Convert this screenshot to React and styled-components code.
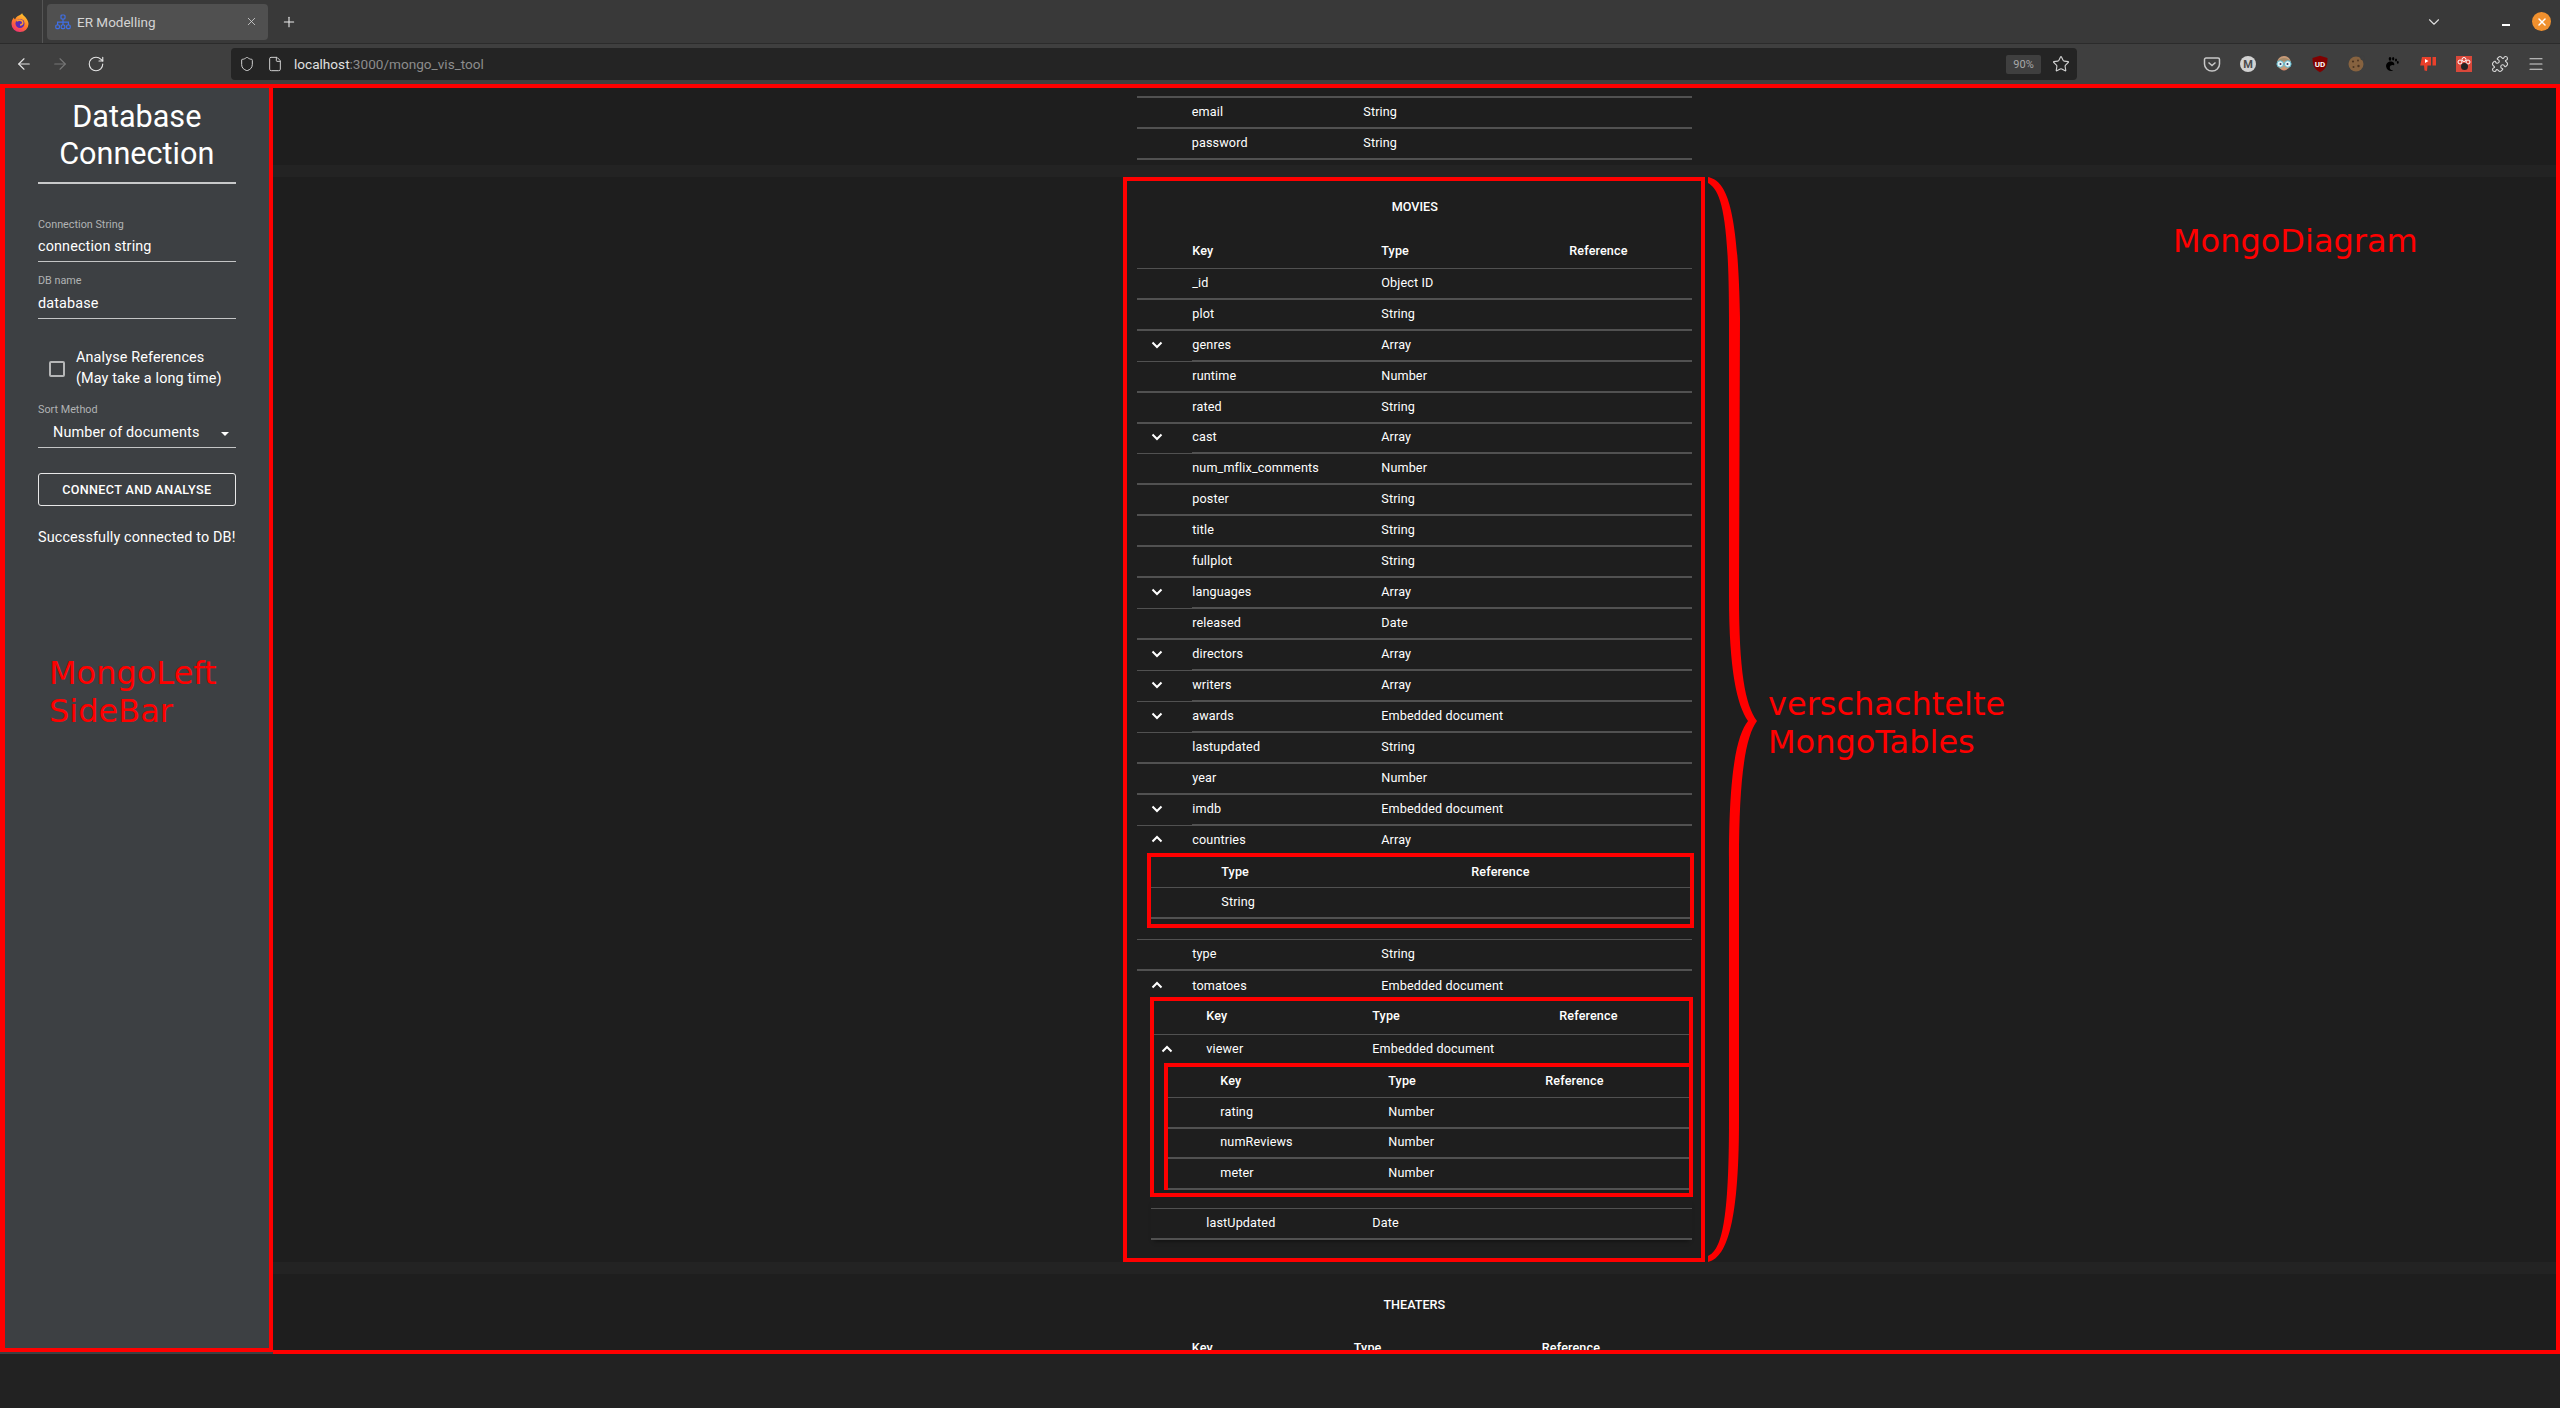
import React from 'react'
import styled, { createGlobalStyle } from 'styled-components'
import { ArrowLeft, ArrowRight, RotateCw, Shield, File, Star, Puzzle, Menu, X, Plus, ChevronDown } from 'lucide-react'

const RED = '#ff0000'
const LINE = '#515151'
const PAPER = '#1e1e1e'

const GlobalStyle = createGlobalStyle`
  html, body { margin: 0; padding: 0; background: #222222; }
  * { box-sizing: border-box; }
`

const Page = styled.div`
  position: relative;
  width: 2560px;
  height: 1408px;
  overflow: hidden;
  background: #222222;
  color: #fff;
  font-family: Roboto, "Liberation Sans", sans-serif;
`

/* browser chrome */
const TabBar = styled.div`
  display: flex;
  align-items: center;
  height: 44px;
  background: #393939;
  border-bottom: 1px solid #2b2b2b;
`
const AppButton = styled.div`
  display: flex;
  align-items: center;
  justify-content: center;
  width: 43px;
  height: 43px;
  padding-right: 3px;
  border-right: 1px solid #555;
`
const Tab = styled.div`
  display: flex;
  align-items: center;
  width: 221px;
  height: 36px;
  margin-left: 4px;
  padding: 0 10px 0 8px;
  gap: 6px;
  background: #505050;
  border-radius: 4px;
  color: #d4d4d4;
  font-size: 13.5px;
`
const TabTitle = styled.span`
  flex: 1;
`
const NewTab = styled.div`
  display: flex;
  margin-left: 13px;
  color: #eee;
`
const WindowControls = styled.div`
  display: flex;
  align-items: center;
  margin-left: auto;
  padding-right: 9px;
  color: #ddd;
`
const MinimizeMark = styled.div`
  width: 8px;
  height: 2px;
  margin: 6px 22px 0 59.5px;
  background: #fff;
`
const CloseDot = styled.div`
  display: flex;
  align-items: center;
  justify-content: center;
  width: 19px;
  height: 19px;
  border-radius: 50%;
  background: #f0902e;
  color: #fff;
`
const NavBar = styled.div`
  display: flex;
  align-items: center;
  height: 40px;
  padding-left: 15px;
  background: #3f3f3f;
`
const NavButtons = styled.div`
  display: flex;
  gap: 18px;
  color: #e4e4e4;
`
const DimIcon = styled.span`
  display: flex;
  color: #777;
`
const UrlBar = styled.div`
  display: flex;
  align-items: center;
  width: 1846px;
  height: 32px;
  margin-left: 126px;
  padding: 0 7px 0 8px;
  background: #242424;
  border-radius: 4px;
  color: #d0d0d0;
  font-size: 13.6px;
`
const UrlIcons = styled.div`
  display: flex;
  gap: 12px;
  margin-right: 11px;
`
const UrlText = styled.span`
  flex: 1;
  color: #e0e0e0;
`
const UrlRest = styled.span`
  color: #8c8c8c;
`
const ZoomBadge = styled.span`
  display: flex;
  align-items: center;
  justify-content: center;
  width: 35px;
  height: 19px;
  margin-right: 11px;
  background: #3f3f3f;
  border-radius: 2px;
  color: #a8a8a8;
  font-size: 11px;
`
const Extensions = styled.div`
  display: flex;
  gap: 18px;
  margin-left: 126px;
  color: #d8d8d8;
`

/* app body */
const Body = styled.div`
  display: flex;
  height: 1270px;
`
const SidebarShell = styled.div`
  flex: 0 0 272px;
  padding-bottom: 2px;
  background: #3d4043;
`
const Sidebar = styled.aside`
  display: flex;
  flex-direction: column;
  height: 100%;
  padding: 9.5px 33px 0;
  border: 4px solid ${RED};
  border-left-width: 5px;
`
const Title = styled.h4`
  margin: 0;
  padding-bottom: 10.5px;
  border-bottom: 2px solid #c8c9ca;
  font-size: 30.6px;
  font-weight: 400;
  line-height: 37px;
  text-align: center;
`
const Field = styled.div`
  margin-top: ${p => p.$top || 12}px;
`
const FieldLabel = styled.div`
  height: 13px;
  margin-bottom: 2.5px;
  color: #b1b3b4;
  font-size: 10.8px;
  line-height: 13px;
`
const FieldValue = styled.div`
  display: flex;
  align-items: center;
  justify-content: space-between;
  height: 29px;
  padding: 0 7px 1px ${p => p.$inset || 0}px;
  border-bottom: 1px solid #c4c5c6;
  font-size: 14.4px;
  letter-spacing: 0.135px;
`
const Caret = styled.span`
  width: 0;
  height: 0;
  margin-top: 3px;
  border-left: 4.5px solid transparent;
  border-right: 4.5px solid transparent;
  border-top: 4.5px solid #fff;
`
const CheckRow = styled.label`
  display: flex;
  align-items: center;
  gap: 11px;
  margin-top: 28px;
  padding-left: 11px;
  font-size: 14.4px;
  line-height: 21px;
  letter-spacing: 0.135px;
`
const CheckBox = styled.span`
  flex: none;
  width: 16px;
  height: 16px;
  margin-top: 2px;
  border: 2px solid #b5b6b7;
  border-radius: 2px;
`
const ConnectButton = styled.button`
  height: 33px;
  margin-top: 25.4px;
  background: transparent;
  border: 1px solid #e8e8e8;
  border-radius: 3px;
  color: #fff;
  font-family: inherit;
  font-size: 12.6px;
  font-weight: 500;
  letter-spacing: 0.36px;
`
const Status = styled.div`
  margin-top: 21.8px;
  font-size: 14.4px;
  line-height: 20px;
  letter-spacing: 0.135px;
  white-space: nowrap;
`

const Diagram = styled.main`
  flex: 1;
  overflow: hidden;
  border: 4px solid ${RED};
  border-left: 0;
`
const Scroller = styled.div`
  display: flex;
  flex-direction: column;
  gap: 12px;
  margin-top: -21px;
  background: #232323;
`
const Paper = styled.section`
  display: flex;
  flex-direction: column;
  align-items: center;
  padding-top: ${p => p.$top || 0}px;
  padding-bottom: ${p => p.$bottom || 0}px;
  background: ${PAPER};
`
const TableBox = styled.div`
  width: 582px;
  padding: 0 9px 18px 10px;
  border: 4px solid ${RED};
`
const Table = styled.div`
  width: 555px;
`
const TableTitle = styled.div`
  height: 53px;
  font-size: 12.6px;
  font-weight: 500;
  line-height: 51px;
  text-align: center;
`
const Row = styled.div`
  display: grid;
  grid-template-columns: ${p => p.$cols};
  height: ${p => p.$height || 30.94}px;
  font-size: 12.6px;
  font-weight: ${p => (p.$head ? 500 : 400)};
  letter-spacing: 0.135px;
`
const Cell = styled.div`
  display: flex;
  align-items: center;
  padding-top: ${p => p.$pt || 0}px;
  padding-bottom: ${p => p.$pb ?? 2}px;
  border-bottom: ${p => p.$line ?? 2}px solid ${LINE};
  white-space: nowrap;
`
const ToggleCell = styled(Cell)`
  padding-left: ${p => p.$left || 15}px;
`
const Nested = styled.div`
  margin: ${p => p.$margin};
  border: 4px solid ${RED};
  ${p => p.$open && 'border-right: 0; border-bottom: 0;'}
  padding-bottom: ${p => p.$pb || 0}px;
`
const RowSpacer = styled.div`
  height: 12px;
  margin-left: ${p => p.$left || 0}px;
  border-bottom: 1px solid ${LINE};
`
const Indented = styled.div`
  margin-left: 14px;
  box-shadow: 0 4px 4px -3px rgba(0, 0, 0, 0.5);
`

/* red notes drawn on top of the screenshot */
const Note = styled.div`
  position: absolute;
  left: ${p => p.$x}px;
  top: ${p => p.$y}px;
  color: ${RED};
  font-family: "DejaVu Sans", sans-serif;
  font-size: 32px;
  line-height: 38px;
  white-space: nowrap;
`
const Brace = styled.svg`
  position: absolute;
  left: 1700px;
  top: 170px;
`

const FirefoxLogo = () => (
  <svg width='18' height='20' viewBox='0 0 18 20'>
    <defs>
      <linearGradient id='ff' x1='0.7' y1='0' x2='0.2' y2='1'>
        <stop offset='0' stopColor='#ffcb2e' />
        <stop offset='0.5' stopColor='#ff7b2a' />
        <stop offset='1' stopColor='#f0287a' />
      </linearGradient>
    </defs>
    <path d='M11 1c.5 2.500 3 3 4 5 1.500 2 2.500 4 2.500 6a8.500 8 0 0 1-17 0c0-3 1-5 2.500-6.500 0 1 .5 1.500 1 2C5 4.500 8 3.500 9 3c1-.5 1.700-1 2-2z' fill='url(#ff)' />
    <circle cx='9' cy='11.500' r='4.500' fill='#5b2bb5' />
    <path d='M5.500 9c2-1.500 5-1 6 .5 1 2-.5 3.500-2.500 3.500' fill='none' stroke='#ff9a2e' strokeWidth='1.600' />
  </svg>
)

const ErFavicon = () => (
  <svg width='16' height='16' viewBox='0 0 16 16' fill='none' stroke='#3f6fe6' strokeWidth='1.200'>
    <rect x='6' y='1' width='4' height='4' rx='1' />
    <rect x='0.800' y='11' width='3.600' height='3.600' rx='1' />
    <rect x='6.200' y='11' width='3.600' height='3.600' rx='1' />
    <rect x='11.600' y='11' width='3.600' height='3.600' rx='1' />
    <path d='M8 5v6M2.600 11V8.200h10.800V11' />
  </svg>
)

const ExtIcon = ({ children }) => <svg width='18' height='18' viewBox='0 0 18 18'>{children}</svg>

const Chevron = ({ up }) => (
  <svg width='12' height='8' viewBox='0 0 12 8' fill='none' stroke='#fff' strokeWidth='2'>
    <path d={up ? 'M1.500 6.500L6 2l4.500 4.500' : 'M1.500 1.500L6 6l4.500-4.500'} />
  </svg>
)

const MAIN_COLS = '55px 189px 188px 1fr'

const MOVIE_ROWS = [
  ['_id', 'Object ID'],
  ['plot', 'String'],
  ['genres', 'Array', true],
  ['runtime', 'Number'],
  ['rated', 'String'],
  ['cast', 'Array', true],
  ['num_mflix_comments', 'Number'],
  ['poster', 'String'],
  ['title', 'String'],
  ['fullplot', 'String'],
  ['languages', 'Array', true],
  ['released', 'Date'],
  ['directors', 'Array', true],
  ['writers', 'Array', true],
  ['awards', 'Embedded document', true],
  ['lastupdated', 'String'],
  ['year', 'Number'],
  ['imdb', 'Embedded document', true]
]

const HeadRow = ({ cols, pb = 0, height = 35, labels = ['Key', 'Type', 'Reference'] }) => (
  <Row $head $cols={cols} $height={height}>
    <Cell $line={1} $pb={pb} />
    {labels.map(label => <Cell key={label} $line={1} $pb={pb}>{label}</Cell>)}
  </Row>
)

const DataRow = ({ cols, name, type, closed }) => (
  <Row $cols={cols}>
    <ToggleCell $line={closed ? 1 : 2} $left={13.5}>{closed && <Chevron />}</ToggleCell>
    <Cell>{name}</Cell>
    <Cell>{type}</Cell>
    <Cell />
  </Row>
)

const OpenRow = ({ cols, name, type, height, left = 13.5, pt = 0 }) => (
  <Row $cols={cols} $height={height}>
    <ToggleCell $line={0} $pb={0} $pt={pt} $left={left}><Chevron up /></ToggleCell>
    <Cell $line={0} $pb={0} $pt={pt}>{name}</Cell>
    <Cell $line={0} $pb={0} $pt={pt}>{type}</Cell>
    <Cell $line={0} />
  </Row>
)

const InfoField = ({ label, value, top }) => (
  <Field $top={top}>
    <FieldLabel>{label}</FieldLabel>
    <FieldValue>{value}</FieldValue>
  </Field>
)

const BrowserChrome = () => (
  <>
    <TabBar>
      <AppButton><FirefoxLogo /></AppButton>
      <Tab>
        <ErFavicon />
        <TabTitle>ER Modelling</TabTitle>
        <X size={13} strokeWidth={1.5} />
      </Tab>
      <NewTab><Plus size={16} strokeWidth={1.6} /></NewTab>
      <WindowControls>
        <ChevronDown size={18} strokeWidth={1.5} />
        <MinimizeMark />
        <CloseDot><X size={12} strokeWidth={3} /></CloseDot>
      </WindowControls>
    </TabBar>
    <NavBar>
      <NavButtons>
        <ArrowLeft size={18} strokeWidth={1.5} />
        <DimIcon><ArrowRight size={18} strokeWidth={1.5} /></DimIcon>
        <RotateCw size={18} strokeWidth={1.5} />
      </NavButtons>
      <UrlBar>
        <UrlIcons>
          <Shield size={16} strokeWidth={1.5} />
          <File size={16} strokeWidth={1.5} />
        </UrlIcons>
        <UrlText>localhost<UrlRest>:3000/mongo_vis_tool</UrlRest></UrlText>
        <ZoomBadge>90%</ZoomBadge>
        <Star size={18} strokeWidth={1.5} />
      </UrlBar>
      <Extensions>
        <ExtIcon>
          <path d='M3 3h12a1.500 1.500 0 0 1 1.500 1.500V9a7.500 7 0 0 1-15 0V4.500A1.500 1.500 0 0 1 3 3z' fill='none' stroke='#c8c8c8' strokeWidth='1.500' />
          <path d='M5.500 7.500L9 10.500l3.500-3' fill='none' stroke='#c8c8c8' strokeWidth='1.500' />
        </ExtIcon>
        <ExtIcon>
          <circle cx='9' cy='9' r='8' fill='#d2d2d2' />
          <text x='9' y='13' textAnchor='middle' fontSize='11' fontWeight='700' fontFamily='Roboto, sans-serif' fill='#4a4a4a'>M</text>
        </ExtIcon>
        <ExtIcon>
          <circle cx='9' cy='8' r='7' fill='#c79a78' />
          <path d='M3 6c2-4 10-4 12 0z' fill='#a58a6a' />
          <circle cx='5.200' cy='9' r='3.300' fill='#dff3f7' stroke='#5db4c8' />
          <circle cx='12.800' cy='9' r='3.300' fill='#dff3f7' stroke='#5db4c8' />
          <circle cx='5.500' cy='9' r='1' fill='#335' />
          <circle cx='12.500' cy='9' r='1' fill='#335' />
          <path d='M6 14c2 2 4 2 6 0z' fill='#d98a6a' />
        </ExtIcon>
        <ExtIcon>
          <path d='M9 0.800l7.500 2.200c0 7-1.500 11.500-7.500 14.200C3 14.500 1.500 10 1.500 3z' fill='#800000' />
          <text x='9' y='11.500' textAnchor='middle' fontSize='8' fontWeight='700' fontFamily='Roboto, sans-serif' fill='#fff'>UD</text>
        </ExtIcon>
        <ExtIcon>
          <circle cx='9' cy='9' r='7.500' fill='#86623f' />
          <circle cx='6' cy='6.500' r='1.100' fill='#4a3320' />
          <circle cx='11' cy='5.500' r='0.900' fill='#4a3320' />
          <circle cx='11.500' cy='11' r='1.200' fill='#4a3320' />
          <circle cx='6.500' cy='12' r='1' fill='#4a3320' />
          <circle cx='15.500' cy='3' r='2.200' fill='#3f3f3f' />
        </ExtIcon>
        <ExtIcon>
          <path d='M8.500 6.500C5 6 2.500 8.800 3.200 12c.7 3.300 4.500 5 7 3.500-2.200 0-3.700-1.500-3.400-3.500.3-1.800 2.700-2.700 4.200-1.600 1-1.800-.2-3.600-2.500-3.900z' fill='#000' />
          <ellipse cx='7' cy='3.800' rx='1.300' ry='1.900' fill='#000' />
          <ellipse cx='10.200' cy='3.800' rx='1.100' ry='1.800' fill='#000' />
          <ellipse cx='13' cy='5' rx='1' ry='1.600' fill='#000' />
          <ellipse cx='14.800' cy='7.400' rx='0.900' ry='1.300' fill='#000' />
        </ExtIcon>
        <ExtIcon>
          <path d='M3 2h9v8.500H8.500L8 16l-2.500-.500L5 10.500H1.200z' fill='#e9402b' />
          <rect x='13.500' y='2' width='3.500' height='8.500' fill='#e9402b' />
          <path d='M6 4l3.500 2L6 8z' fill='#fff' />
        </ExtIcon>
        <ExtIcon>
          <rect x='1' y='1' width='16' height='16' fill='#d9483a' />
          <circle cx='5' cy='7' r='2' fill='none' stroke='#fff' />
          <circle cx='9' cy='4.500' r='2' fill='none' stroke='#fff' />
          <circle cx='13' cy='7' r='2' fill='none' stroke='#fff' />
          <circle cx='9.500' cy='11.500' r='3.500' fill='#222' />
        </ExtIcon>
        <Puzzle size={18} strokeWidth={1.5} />
        <Menu size={18} strokeWidth={1.5} />
      </Extensions>
    </NavBar>
  </>
)

const MongoLeftSideBar = () => (
  <SidebarShell>
    <Sidebar>
      <Title>Database Connection</Title>
      <InfoField label='Connection String' value='connection string' top={33.5} />
      <InfoField label='DB name' value='database' />
      <CheckRow>
        <CheckBox />
        <span>Analyse References<br />(May take a long time)</span>
      </CheckRow>
      <Field $top={14.6}>
        <FieldLabel>Sort Method</FieldLabel>
        <FieldValue $inset={15}>Number of documents<Caret /></FieldValue>
      </Field>
      <ConnectButton>CONNECT AND ANALYSE</ConnectButton>
      <Status>Successfully connected to DB!</Status>
    </Sidebar>
  </SidebarShell>
)

const MoviesTable = () => (
  <TableBox>
    <TableTitle>MOVIES</TableTitle>
    <Table>
      <HeadRow cols={MAIN_COLS} />
      {MOVIE_ROWS.map(([name, type, closed]) => (
        <DataRow key={name} cols={MAIN_COLS} name={name} type={type} closed={closed} />
      ))}
      <OpenRow cols={MAIN_COLS} name='countries' type='Array' height={27.5} />
      <Nested $margin='0 -2px 0 10px' $pb={4.5}>
        <HeadRow cols='70px 250px 1fr' height={31} labels={['Type', 'Reference']} pb={2} />
        <Row $cols='70px 250px 1fr'>
          <Cell /><Cell>String</Cell><Cell />
        </Row>
      </Nested>
      <RowSpacer />
      <DataRow cols={MAIN_COLS} name='type' type='String' />
      <OpenRow cols={MAIN_COLS} name='tomatoes' type='Embedded document' height={26} pt={3} />
      <Nested $margin='0 -1px 0 13px' $pb={3}>
        <HeadRow cols='52px 166px 187px 1fr' height={34} pb={3} />
        <OpenRow cols='52px 166px 187px 1fr' name='viewer' type='Embedded document' height={28} left={7} />
        <Nested $open $margin='0 0 0 10px'>
          <HeadRow cols='52px 168px 157px 1fr' height={31} pb={3} />
          {[['rating', 'Number'], ['numReviews', 'Number'], ['meter', 'Number']].map(([name, type]) => (
            <DataRow key={name} cols='52px 168px 157px 1fr' name={name} type={type} />
          ))}
        </Nested>
      </Nested>
      <Indented>
        <RowSpacer />
        <DataRow cols='55px 166px 187px 1fr' name='lastUpdated' type='Date' />
      </Indented>
    </Table>
  </TableBox>
)

const MongoDiagram = () => (
  <Diagram>
    <Scroller>
      <Paper $bottom={5}>
        <Table>
          <DataRow cols='55px 171.5px 188px 1fr' name='name' type='String' />
          <DataRow cols='55px 171.5px 188px 1fr' name='email' type='String' />
          <DataRow cols='55px 171.5px 188px 1fr' name='password' type='String' />
        </Table>
      </Paper>
      <Paper><MoviesTable /></Paper>
      <Paper $top={5} $bottom={20}>
        <Table>
          <TableTitle>THEATERS</TableTitle>
          <HeadRow cols='55px 162px 188px 1fr' pb={4} />
        </Table>
      </Paper>
    </Scroller>
  </Diagram>
)

export default function App () {
  return (
    <Page>
      <GlobalStyle />
      <BrowserChrome />
      <Body>
        <MongoLeftSideBar />
        <MongoDiagram />
      </Body>
      <Note $x={49} $y={654}>MongoLeft<br />SideBar</Note>
      <Note $x={2173} $y={222}>MongoDiagram</Note>
      <Note $x={1768} $y={685}>verschachtelte<br />MongoTables</Note>
      <Brace width='70' height='1100' viewBox='1700 170 70 1100'>
        <path
          fill={RED}
          d='M1708 177C1725 181 1738 200 1740 318L1739 596C1739 670 1745 705 1757 721C1745 737 1739 780 1739 860L1739 1120C1739 1230 1725 1258 1708 1262L1708 1256C1722 1250 1729 1220 1729 1120L1729 860C1729 770 1737 735 1748 721C1737 705 1729 670 1729 596L1729 318C1729 210 1720 190 1708 183Z'
        />
      </Brace>
    </Page>
  )
}
